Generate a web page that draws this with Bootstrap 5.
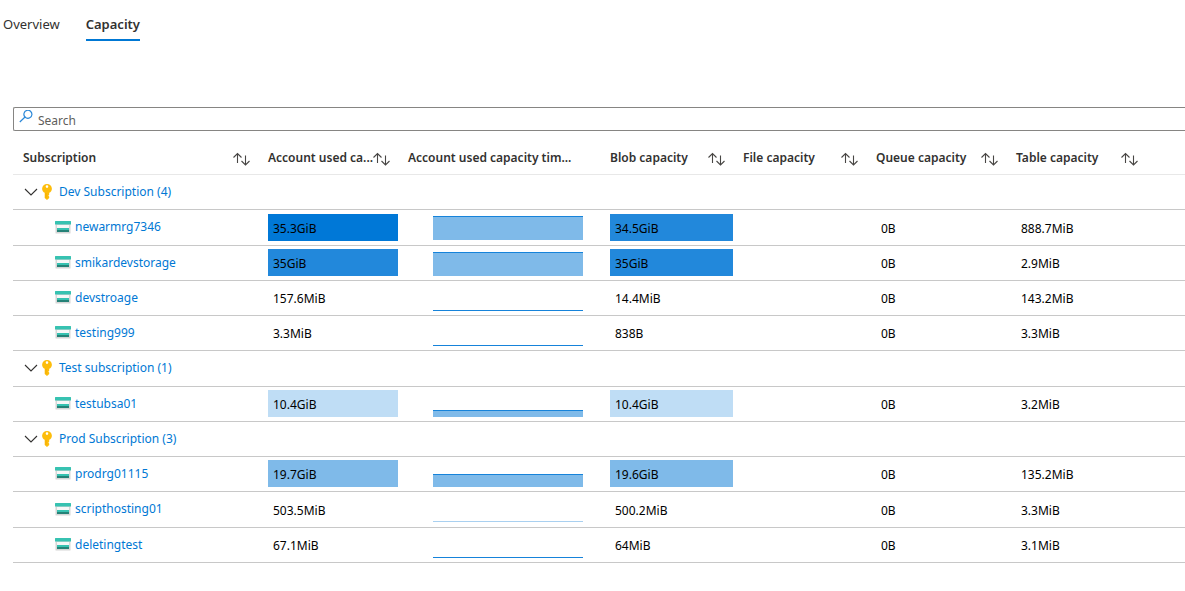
<!DOCTYPE html>
<html lang="en">
<head>
<meta charset="utf-8">
<meta name="viewport" content="width=device-width, initial-scale=1">
<title>Storage accounts - Capacity</title>
<link href="https://cdn.jsdelivr.net/npm/bootstrap@5.3.0/dist/css/bootstrap.min.css" rel="stylesheet">
<style>
  body { font-family: "Noto Sans", "Open Sans", sans-serif; font-size: 12px; line-height: 16px; color: #323130; overflow-x: hidden; }
  .tabs { gap: 26px; padding: 14px 0 0 3px; font-size: 13px; line-height: 20px; }
  .tabs .nav-link { padding: 0 0 5px; color: #323130; border-bottom: 2px solid transparent; }
  .tabs .nav-link.active { font-weight: 600; border-color: #0078d4; }
  .workbook { margin: 66px 0 0 13px; }
  .search-box { height: 24px; border: 1px solid #868583; border-right: 0; border-radius: 2px 0 0 2px; padding-left: 5px; gap: 5px; }
  .search-box svg { margin-top: 2px; }
  .search-box input { border: 0; outline: 0; padding: 4px 0 0; line-height: 18px; background: none; color: #605e5c; }
  .search-box input::placeholder { color: #605e5c; opacity: 1; }
  .grid { table-layout: fixed; width: 100%; min-width: 1133px; margin-top: 9px; }
  .grid th, .grid td { padding: 0 0 0 10px; border-bottom: 1px solid #c8c8c8; vertical-align: middle; white-space: nowrap; }
  .grid thead th, .grid thead td { height: 34px; border-color: #e8e8e8; font-weight: 600; }
  .grid thead th { padding-top: 2px; }
  .grid tbody tr { height: 35px; }
  .grid tbody tr:nth-child(4n+2) { height: 36px; }
  .grid tbody th { font-weight: 400; }
  .grid a { color: #0078d4; text-decoration: none; }
  .c-name { width: 245px; } .c-used, .c-wide { width: 140px; } .c-time { width: 202px; } .c-mid { width: 133px; }
  .sort, .toggle { border: 0; background: none; padding: 0; line-height: 0; color: inherit; }
  .sort { margin-right: 8px; padding-top: 2px; }
  .toggle { margin: 0 4px 0 1px; }
  .group-name { margin-left: 7px; }
  .account { padding-left: 32px; gap: 4px; }
  .heat { height: 27px; line-height: 30px; padding-left: 5px; color: #000; }
  .heat-5 { background: #0078d7; } .heat-4 { background: #2288db; } .heat-3 { background: #7fbae9; } .heat-1 { background: #bfddf5; }
  .spark { width: 150px; height: 26px; margin-left: 25px; }
  .spark div { background: #7fbae9; border-top: 1px solid #1683da; }
  .spark .faint { border-color: #a9d0f0; }
</style>
</head>
<body>
<nav class="nav tabs" aria-label="Views">
  <a class="nav-link" href="#overview">Overview</a>
  <a class="nav-link active" href="#capacity" aria-current="page">Capacity</a>
</nav>

<svg class="d-none" xmlns="http://www.w3.org/2000/svg">
  <symbol id="i-sort" viewBox="0 0 17 14"><path d="M4.500 11V1.500M.5 5.500l4-4 4 4M12.500 3.500V13M8.500 9l4 4 4-4" fill="none" stroke="#484644" stroke-width="1.100"/></symbol>
  <symbol id="i-chevron" viewBox="0 0 14 8"><path d="M1 1l6 6 6-6" fill="none" stroke="#323130" stroke-width="1.100"/></symbol>
  <symbol id="i-key" viewBox="0 0 10 16"><path fill="#fdbd0c" fill-rule="evenodd" d="M5 0a4.900 4.900 0 0 0-4.900 4.700c0 1.900 1.100 3.300 2.600 4.100v5.200L5 16l2.200-2v-1.400l-.9-.9.9-.9v-2c1.600-.8 2.700-2.200 2.700-4.100A4.900 4.900 0 0 0 5 0zm0 1.300a1.300 1.300 0 1 1 0 2.600 1.300 1.300 0 0 1 0-2.600z"/><path d="M4 9v4.800" stroke="#f0a800" stroke-width=".8"/></symbol>
  <symbol id="i-storage" viewBox="0 0 16 13"><path fill="#d6d6d6" d="M.5 3h15v9a.5.500 0 0 1-.5.500H1a.5.500 0 0 1-.5-.5z"/><path fill="#f7f7f7" d="M2 4h12v3H2z"/><path fill="#37c2b1" d="M.5 0h15a.5.500 0 0 1 .5.500V3.500H0V.5A.5.500 0 0 1 .5 0z"/><path fill="#37c2b1" d="M2 7h12v2H2z"/><path fill="#258277" d="M2 9h12v2H2z"/></symbol>
</svg>

<main class="workbook">
  <div class="search-box d-flex align-items-start">
    <label for="filter" class="lh-1"><svg width="14" height="14" viewBox="0 0 14 14" class="d-block" role="img" aria-label="Search"><path d="M5.800 7.800a4 4 0 1 1 1.200 1zM6.300 7.700.8 13" transform="translate(0 -1)" fill="none" stroke="#2b88d8" stroke-width="1.200"/></svg></label>
    <input id="filter" type="text" class="flex-grow-1" placeholder="Search">
  </div>

  <table class="grid">
    <colgroup><col class="c-name"><col class="c-used"><col class="c-time"><col class="c-mid"><col class="c-mid"><col class="c-wide"><col class="c-wide"><col></colgroup>
    <thead>
      <tr id="head"></tr>
    </thead>
    <tbody id="rows"></tbody>
  </table>
</main>

<script src="https://cdn.jsdelivr.net/npm/bootstrap@5.3.0/dist/js/bootstrap.bundle.min.js"></script>
<script>
  const icon = (id, w, h) => `<svg class="flex-shrink-0" width="${w}" height="${h}" aria-hidden="true"><use href="#i-${id}"/></svg>`;
  const heads = ['Subscription', 'Account used ca...', 'Account used capacity tim...', 'Blob capacity', 'File capacity', 'Queue capacity', 'Table capacity'];
  document.getElementById('head').innerHTML = heads.map((h, i) =>
    `<th scope="col"><div class="d-flex align-items-center justify-content-between"><span>${h}</span>${i === 2 ? '' :
      `<button class="sort" type="button" aria-label="Sort by ${h}">${icon('sort', 17, 14)}</button>`}</div></th>`).join('') + '<td></td>';

  // account: name, used, used heat, chart height, chart class, blob, blob heat, table
  const groups = [
    ['Dev Subscription (4)', [
      ['newarmrg7346', '35.3GiB', 5, 24, '', '34.5GiB', 4, '888.7MiB'],
      ['smikardevstorage', '35GiB', 4, 24, '', '35GiB', 4, '2.9MiB'],
      ['devstroage', '157.6MiB', 0, 1, '', '14.4MiB', 0, '143.2MiB'],
      ['testing999', '3.3MiB', 0, 1, '', '838B', 0, '3.3MiB']]],
    ['Test subscription (1)', [
      ['testubsa01', '10.4GiB', 1, 7, '', '10.4GiB', 1, '3.2MiB']]],
    ['Prod Subscription (3)', [
      ['prodrg01115', '19.7GiB', 3, 13, '', '19.6GiB', 3, '135.2MiB'],
      ['scripthosting01', '503.5MiB', 0, 1, 'faint', '500.2MiB', 0, '3.3MiB'],
      ['deletingtest', '67.1MiB', 0, 1, '', '64MiB', 0, '3.1MiB']]]
  ];
  const value = (v, heat) => `<td><div class="heat${heat ? ' heat-' + heat : ''}">${v}</div></td>`;
  document.getElementById('rows').innerHTML = groups.map(([name, accounts]) =>
    `<tr><th scope="rowgroup" colspan="8"><div class="d-flex align-items-center"><button class="toggle" type="button" aria-expanded="true" aria-label="Toggle ${name}">${icon('chevron', 14, 8)}</button>${icon('key', 10, 16)}<a class="group-name" href="#">${name}</a></div></th></tr>` +
    accounts.map(([n, used, uh, ch, cc, blob, bh, table]) =>
      `<tr><th scope="row"><div class="account d-flex align-items-center">${icon('storage', 16, 13)}<a href="#">${n}</a></div></th>${value(used, uh)}` +
      `<td><div class="spark d-flex align-items-end"><div class="w-100 ${cc}" style="height:${ch}px"></div></div></td>` +
      `${value(blob, bh)}<td></td>${value('0B')}${value(table)}<td></td></tr>`).join('')).join('');
</script>
</body>
</html>
